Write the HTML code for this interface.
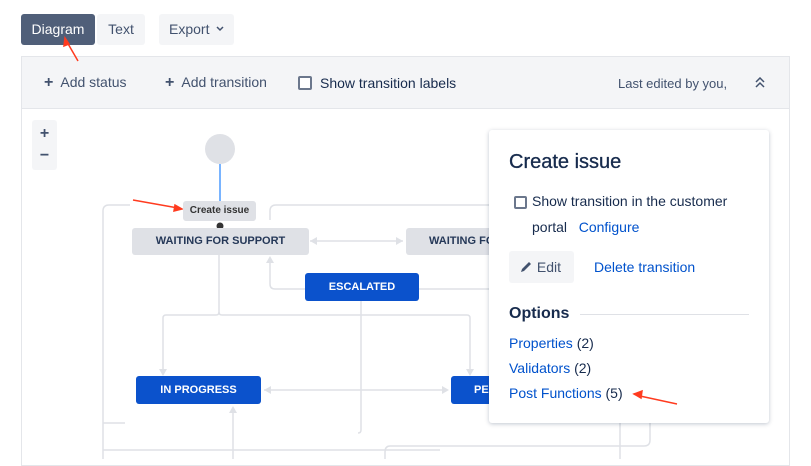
<!DOCTYPE html>
<html><head><style>
*{box-sizing:border-box;margin:0;padding:0}
body{width:811px;height:459px;overflow:hidden;background:#fff;font-family:"Liberation Sans",sans-serif;color:#172b4d;position:relative}
.a{position:absolute}
.btn{position:absolute;top:14px;height:31px;border-radius:3px;background:#f4f5f7;color:#42526e;font-size:14px;line-height:31px;text-align:center}
.st{position:absolute;height:27px;border-radius:3px;font-size:11px;font-weight:bold;line-height:27px;text-align:center}
.g{background:#dfe1e6;color:#253858}
.b{background:#0b52cc;color:#fff}
.lk{color:#0052cc}
</style></head><body>
<div class="btn" style="left:21px;width:74px;background:#505f79;color:#fff">Diagram</div>
<div class="btn" style="left:97px;width:48px">Text</div>
<div class="btn" style="left:159px;width:75px;text-align:left;padding-left:10px">Export <svg width="8" height="6" style="margin-left:3px;vertical-align:2px"><path d="M1 1 L4 4 L7 1" stroke="#42526e" stroke-width="1.5" fill="none"/></svg></div>

<div class="a" style="left:21px;top:56px;width:769px;height:410px;border:1px solid #e4e6ea"></div>
<div class="a" style="left:22px;top:57px;width:767px;height:52px;background:#f4f5f7;border-bottom:1px solid #e4e6ea"></div>
<div class="a" style="left:44px;top:74px;font-size:14px;color:#42526e"><b style="font-size:16px;color:#42526e">+</b>&nbsp; Add status</div>
<div class="a" style="left:165px;top:74px;font-size:14px;color:#42526e"><b style="font-size:16px;color:#42526e">+</b>&nbsp; Add transition</div>
<div class="a" style="left:298px;top:76px;width:14px;height:14px;border:2px solid #6b778c;border-radius:2px;background:#fff"></div>
<div class="a" style="left:320px;top:75px;font-size:14px;color:#172b4d">Show transition labels</div>
<div class="a" style="left:618px;top:76px;font-size:13px;color:#42526e">Last edited by you,</div>
<svg class="a" style="left:754px;top:77px" width="12" height="12"><path d="M2 5 L6 1 L10 5 M2 10 L6 6 L10 10" stroke="#42526e" stroke-width="1.5" fill="none"/></svg>

<div class="a" style="left:32px;top:120px;width:25px;height:50px;background:#f4f5f7;border-radius:3px;text-align:center;font-weight:bold;color:#42526e;font-size:16px;line-height:22px;padding-top:3px">+<br>&minus;</div>

<svg class="a" style="left:0;top:0" width="811" height="459">
<g stroke="#dfe1e6" stroke-width="1.5" fill="none">
<path d="M130 205 H109 Q103 205 103 211 V459"/>
<path d="M270 220 V211 Q270 205 276 205 H500"/>
<path d="M103 450 H440"/>
<path d="M310 241 H403"/>
<path d="M219 254 V312 Q219 315 216 315 H166 Q163 315 163 318 V372"/>
<path d="M219 312 Q219 315 222 315 H467 Q470 315 470 318 V372"/>
<path d="M270 262 V284 Q270 289 275 289 H305"/>
<path d="M418 289 H500"/>
<path d="M361 301 V430 Q361 433 358 433"/>
<path d="M264 390 H447"/>
<path d="M233 410 V459"/>
<path d="M103 423 H125"/>
<path d="M620 410 V459"/><path d="M650 410 V440 Q650 446 644 446 H390 Q385 446 385 452 V459"/>
</g>
<g fill="#dfe1e6">
<path d="M310 241 l7 -4 v8z"/><path d="M403 241 l-7 -4 v8z"/>
<path d="M270 256 l-4 7 h8z"/>
<path d="M163 376 l-4 -7 h8z"/><path d="M470 376 l-4 -7 h8z"/>
<path d="M264 390 l7 -4 v8z"/><path d="M449 390 l-7 -4 v8z"/>
<path d="M233 406 l-4 7 h8z"/>
</g>
<circle cx="220" cy="149" r="15" fill="#dfe1e6"/>
<path d="M220 164 V205" stroke="#4c9aff" stroke-width="1.5"/>
<circle cx="220" cy="226" r="3.5" fill="#333"/>
<g stroke="#ff3b1f" stroke-width="1.5" fill="#ff3b1f">
<path d="M78 61 L67 42" fill="none"/><path d="M65 38 l-1 8 l5 -2z"/>
<path d="M133 200 L178 208" fill="none"/><path d="M182 209 l-7 -4 l-1 6z"/>
</g>
</svg>

<div class="a" style="left:183px;top:201px;width:73px;height:20px;background:#dfe1e6;border-radius:3px;font-size:10px;font-weight:bold;line-height:20px;text-align:center;color:#333">Create issue</div>
<div class="st g" style="left:132px;top:228px;width:177px">WAITING FOR SUPPORT</div>
<div class="st g" style="left:406px;top:228px;width:100px;text-align:left;padding-left:23px">WAITING FOR</div>
<div class="st b" style="left:305px;top:273px;width:114px;height:28px;line-height:28px">ESCALATED</div>
<div class="st b" style="left:136px;top:376px;width:125px;height:28px;line-height:28px">IN PROGRESS</div>
<div class="st b" style="left:451px;top:376px;width:50px;height:28px;line-height:28px;text-align:left;padding-left:23px">PE</div>

<div class="a" style="left:489px;top:130px;width:280px;height:293px;background:#fff;border-radius:3px;box-shadow:0 1px 4px rgba(9,30,66,.25)">
<div class="a" style="left:20px;top:21px;font-size:20px;color:#172b4d;-webkit-text-stroke:0.3px #172b4d">Create issue</div>
<div class="a" style="left:25px;top:66px;width:13px;height:13px;border:2px solid #6b778c;border-radius:2px"></div>
<div class="a" style="left:43px;top:58px;font-size:14px;line-height:26px;color:#172b4d">Show transition in the customer<br>portal &nbsp; <span class="lk">Configure</span></div>
<div class="a" style="left:20px;top:121px;width:65px;height:32px;background:#f4f5f7;border-radius:3px;font-size:14px;line-height:32px;color:#42526e;padding-left:11px"><svg width="13" height="13" style="vertical-align:-1px"><path d="M1 12 L2 9 L9 2 L11 4 L4 11 Z" fill="#42526e"/></svg> Edit</div>
<div class="a lk" style="left:105px;top:129px;font-size:14px">Delete transition</div>
<div class="a" style="left:20px;top:175px;font-size:16px;font-weight:bold;color:#172b4d">Options</div>
<div class="a" style="left:91px;top:184px;width:169px;height:1px;background:#dfe1e6"></div>
<div class="a" style="left:20px;top:201px;font-size:14px;line-height:25px"><span class="lk">Properties</span> (2)<br><span class="lk">Validators</span> (2)<br><span class="lk">Post Functions</span> (5)</div>
</div>
<svg class="a" style="left:0;top:0" width="811" height="459"><g stroke="#ff3b1f" stroke-width="1.5" fill="#ff3b1f"><path d="M677 404 L640 396" fill="none"/><path d="M634 394 l8 -3 l-1 7z"/></g></svg>
</body></html>
